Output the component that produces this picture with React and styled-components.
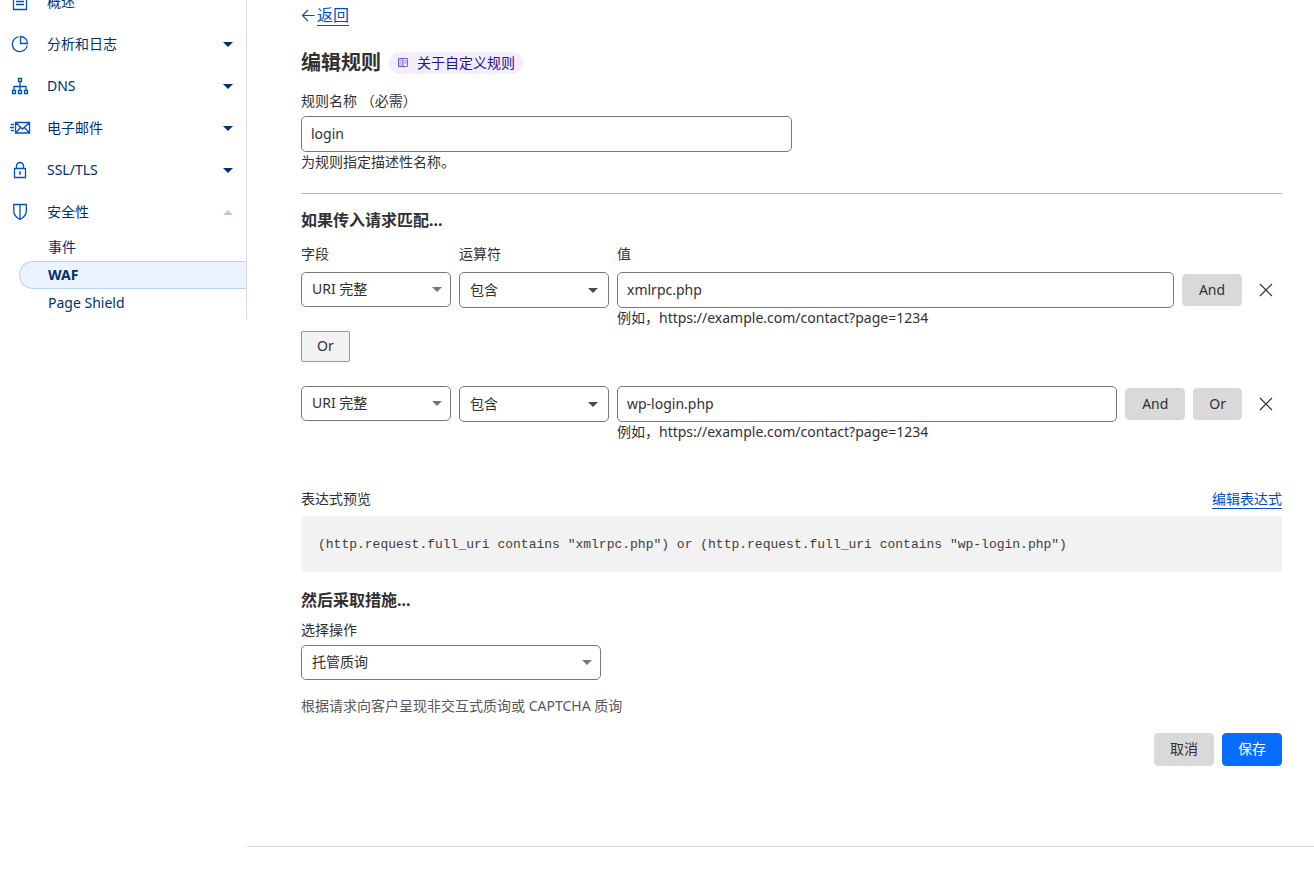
import React from "react";
import styled, { createGlobalStyle } from "styled-components";

const GlobalStyle = createGlobalStyle`
  *, *::before, *::after { box-sizing: border-box; }
  body {
    margin: 0;
    background: #fff;
    color: #313131;
    font-family: "Noto Sans", "Noto Sans CJK SC", sans-serif;
    font-size: 14px;
    line-height: 20px;
  }
  h1, h2, p, ul { margin: 0; padding: 0; }
  ul { list-style: none; }
  button, input, select { font: inherit; color: inherit; margin: 0; }
`;

const Page = styled.div`
  display: flex;
  align-items: flex-start;
  overflow: hidden;
`;

const Sidebar = styled.nav`
  flex: 0 0 247px;
  margin-top: -19px;
  padding-bottom: 2px;
  border-right: 1px solid #d9d9d9;
  color: #003070;
`;

const NavLink = styled.a`
  display: flex;
  align-items: center;
  height: 42px;
  padding: 0 13px 0 8px;
  color: inherit;
  text-decoration: none;
`;

const NavIcon = styled.svg`
  flex: none;
  width: 24px;
  height: 24px;
  margin-right: 15px;
  fill: none;
  stroke: #0051c3;
  stroke-width: 1.3;
`;

const NavText = styled.span`
  flex: 1;
`;

const Caret = styled.svg`
  flex: none;
  width: 10px;
  height: 5px;
  fill: ${(p) => p.$color};
`;

const SubLink = styled.a`
  display: flex;
  align-items: center;
  height: 28px;
  margin-left: 19px;
  padding-left: 28px;
  border: 1px solid ${(p) => (p.$active ? "#b6d3fb" : "transparent")};
  border-right: 0;
  border-radius: 14px 0 0 14px;
  background: ${(p) => (p.$active ? "#ebf3fe" : "transparent")};
  font-weight: ${(p) => (p.$active ? 700 : 400)};
  color: inherit;
  text-decoration: none;
`;

const Main = styled.main`
  flex: 1;
  min-width: 0;
`;

const Form = styled.form`
  padding: 5px 32px 80px 54px;
  border-bottom: 1px solid #d9d9d9;
`;

const BackLink = styled.a`
  display: flex;
  width: max-content;
  align-items: center;
  gap: 2px;
  height: 20px;
  font-size: 16px;
  color: #0051c3;
  text-decoration: none;
`;

const BackText = styled.span`
  border-bottom: 1px solid currentColor;
`;

const BackArrow = styled.svg`
  width: 14px;
  height: 14px;
  fill: none;
  stroke: #0051c3;
  stroke-width: 1.2;
`;

const TitleRow = styled.div`
  display: flex;
  align-items: center;
  gap: 8px;
  margin: 24px 0 14px;
`;

const Title = styled.h1`
  font-size: 20px;
  line-height: 28px;
  font-weight: 700;
`;

const DocsPill = styled.a`
  display: flex;
  align-items: center;
  gap: 8px;
  height: 22px;
  padding: 0 8px;
  border-radius: 11px;
  background: #f2eefd;
  color: #27138b;
  text-decoration: none;
`;

const BookIcon = styled.svg`
  width: 12px;
  height: 12px;
  fill: none;
  stroke: #7860dc;
`;

const Label = styled.label`
  display: block;
  margin-bottom: ${(p) => p.$gap || 5}px;
`;

const TextInput = styled.input`
  display: block;
  width: 100%;
  height: 36px;
  padding: 0 9px 1px;
  border: 1px solid #797979;
  border-radius: 5px;
  background: #fff;
  outline: 0;
`;

const NameField = styled.div`
  width: 50%;
`;

const Divider = styled.hr`
  margin: 21px 0 16px;
  border: 0;
  border-top: 1px solid #b6b6b6;
`;

const SectionTitle = styled.h2`
  font-size: 16px;
  line-height: 20px;
  font-weight: 700;
`;

const RuleGrid = styled.div`
  display: grid;
  grid-template-columns: 150px 150px minmax(0, 1fr);
  column-gap: 8px;
  margin-top: ${(p) => p.$top}px;
`;

const SelectBox = styled.div`
  display: grid;
  align-items: center;
  align-self: start;
  max-width: 300px;
  > * { grid-area: 1 / 1; }
  > svg { justify-self: end; margin-right: ${(p) => p.$inset || 9}px; pointer-events: none; }
`;

const Select = styled.select`
  appearance: none;
  width: 100%;
  height: ${(p) => p.$height || 35}px;
  padding: 0 28px 1px 10px;
  border: 1px solid #797979;
  border-radius: 5px;
  background: #fff;
  outline: 0;
`;

const ValueRow = styled.div`
  display: flex;
  align-items: center;
  gap: 8px;
`;

const Button = styled.button`
  flex: none;
  min-width: ${(p) => p.$minWidth || 48}px;
  height: ${(p) => p.$height || 32}px;
  padding: 0 15px 1px;
  border: 1px solid ${(p) => (p.$kind === "primary" ? "#056dff" : p.$kind === "outline" ? "#999" : "#d9d9d9")};
  border-radius: ${(p) => (p.$kind === "outline" ? 2 : 4)}px;
  background: ${(p) => (p.$kind === "primary" ? "#056dff" : p.$kind === "outline" ? "#f2f2f2" : "#d9d9d9")};
  color: ${(p) => (p.$kind === "primary" ? "#fff" : "#313131")};
`;

const CloseButton = styled.button`
  flex: none;
  display: grid;
  place-items: center;
  width: 32px;
  height: 32px;
  padding: 0;
  border: 0;
  background: none;
  svg { width: 14px; height: 14px; stroke: #313131; stroke-width: 1.2; }
`;

const OrRow = styled.div`
  margin-top: 3px;
`;

const PreviewHead = styled.div`
  display: flex;
  justify-content: space-between;
  align-items: flex-start;
  margin: 47px 0 7px;
`;

const EditLink = styled.a`
  color: #0051c3;
  text-decoration: none;
  border-bottom: 1px solid currentColor;
  height: 20px;
`;

const Code = styled.code`
  display: block;
  padding: 19px 17px 17px;
  border-radius: 4px;
  background: #f2f2f2;
  color: #404040;
  font-family: "Liberation Mono", monospace;
  font-size: 13px;
  margin-bottom: 18px;
`;

const ActionField = styled.div`
  margin-top: 10px;
`;

const Help = styled.p`
  margin: 16px 0 17px;
  color: #595959;
`;

const Actions = styled.div`
  display: flex;
  justify-content: flex-end;
  gap: 8px;
`;

const Triangle = ({ color, up }) => (
  <Caret $color={color} viewBox="0 0 10 5" aria-hidden="true">
    <path d={up ? "M0 5h10L5 0z" : "M0 0h10L5 5z"} />
  </Caret>
);

const navItems = [
  { text: "概述", icon: <path d="M5.5 4.500h13v15h-13zM8 8.500h8M8 11.500h8M8 14.500h8" /> },
  { text: "分析和日志", caret: "down", icon: <path d="M10.500 4.800a7.500 7.500 0 1 0 8.700 8.700M12.500 4.500v7h7a7 7 0 0 0-7-7z" /> },
  { text: "DNS", caret: "down", icon: <path d="M10.500 4.500h3v3h-3zM4.500 16.500h3v3h-3zM10.500 16.500h3v3h-3zM16.500 16.500h3v3h-3zM12 7.500v9M6 16.500V12.500h12v4" /> },
  { text: "电子邮件", caret: "down", icon: <path d="M7.500 6.500h14v10.500h-14zM7.500 6.500l7 6.500 7-6.500M7.500 17l5-5.500M21.500 17l-5-5.500M3 8.500h3M2 11.500h4M3 14.500h3" /> },
  { text: "SSL/TLS", caret: "down", icon: <path d="M6.500 10.500h11v9h-11zM8.500 10.500V8a3.500 3.500 0 0 1 7 0v2.500M12 14v3M11 14.200h2" /> },
  { text: "安全性", caret: "up", icon: <path d="M5.800 4.500h12.500v6.500c0 4-3 6.800-6.300 8.500-3.300-1.700-6.200-4.500-6.200-8.500zM12 4.500v15" /> },
];

const subItems = [{ text: "事件" }, { text: "WAF", active: true }, { text: "Page Shield" }];

function Navigation() {
  return (
    <Sidebar aria-label="导航">
      <ul>
        {navItems.map((item) => (
          <li key={item.text}>
            <NavLink href="#">
              <NavIcon viewBox="0 0 24 24" aria-hidden="true">{item.icon}</NavIcon>
              <NavText>{item.text}</NavText>
              {item.caret && <Triangle up={item.caret === "up"} color={item.caret === "up" ? "#bfcbdb" : "#003070"} />}
            </NavLink>
          </li>
        ))}
      </ul>
      <ul>
        {subItems.map((item) => (
          <li key={item.text}>
            <SubLink href="#" $active={item.active}>{item.text}</SubLink>
          </li>
        ))}
      </ul>
    </Sidebar>
  );
}

function Condition({ id, value, withLabels, withOr }) {
  return (
    <RuleGrid $top={withLabels ? 14 : 24}>
      {withLabels && (
        <>
          <Label htmlFor={`${id}-field`} $gap={8}>字段</Label>
          <Label htmlFor={`${id}-operator`} $gap={8}>运算符</Label>
          <Label htmlFor={`${id}-value`} $gap={8}>值</Label>
        </>
      )}
      <SelectBox>
        <Select id={`${id}-field`} aria-label="字段"><option>URI 完整</option></Select>
        <Triangle color="#72767d" />
      </SelectBox>
      <SelectBox $inset={11}>
        <Select id={`${id}-operator`} aria-label="运算符" $height={36}><option>包含</option></Select>
        <Triangle color="#4a4a4a" />
      </SelectBox>
      <div>
        <ValueRow>
          <TextInput id={`${id}-value`} aria-label="值" defaultValue={value} />
          <Button type="button" $minWidth={60}>And</Button>
          {withOr && <Button type="button">Or</Button>}
          <CloseButton type="button" aria-label="删除">
            <svg viewBox="0 0 14 14"><path d="M1 1l12 12M13 1L1 13" /></svg>
          </CloseButton>
        </ValueRow>
        <p>例如，https://example.com/contact?page=1234</p>
      </div>
    </RuleGrid>
  );
}

function RuleAction() {
  return (
    <ActionField>
      <Label htmlFor="action">选择操作</Label>
      <SelectBox>
        <Select id="action"><option>托管质询</option></Select>
        <Triangle color="#72767d" />
      </SelectBox>
      <Help>根据请求向客户呈现非交互式质询或 CAPTCHA 质询</Help>
    </ActionField>
  );
}

export default function App() {
  return (
    <>
      <GlobalStyle />
      <Page>
        <Navigation />
        <Main>
          <Form>
            <BackLink href="#">
              <BackArrow viewBox="0 0 14 14" aria-hidden="true"><path d="M13.500 7.500H1.500M7 2L1.500 7.500 7 13" /></BackArrow>
              <BackText>返回</BackText>
            </BackLink>
            <TitleRow>
              <Title>编辑规则</Title>
              <DocsPill href="#">
                <BookIcon viewBox="0 0 12 12" aria-hidden="true">
                  <path d="M1.500 1.500H6v8H1.500z" fill="#c9bff2" />
                  <path d="M6 1.500h4.500v8H6v1M7.500 4h2M7.500 6h2" />
                </BookIcon>
                关于自定义规则
              </DocsPill>
            </TitleRow>
            <NameField>
              <Label htmlFor="rule-name">规则名称 （必需）</Label>
              <TextInput id="rule-name" defaultValue="login" />
              <p>为规则指定描述性名称。</p>
            </NameField>
            <Divider />
            <SectionTitle>如果传入请求匹配...</SectionTitle>
            <Condition id="first" value="xmlrpc.php" withLabels />
            <OrRow>
              <Button type="button" $kind="outline" $height={31}>Or</Button>
            </OrRow>
            <Condition id="second" value="wp-login.php" withOr />
            <PreviewHead>
              <span>表达式预览</span>
              <EditLink href="#">编辑表达式</EditLink>
            </PreviewHead>
            <Code>(http.request.full_uri contains "xmlrpc.php") or (http.request.full_uri contains "wp-login.php")</Code>
            <SectionTitle>然后采取措施...</SectionTitle>
            <RuleAction />
            <Actions>
              <Button type="button" $height={33}>取消</Button>
              <Button type="submit" $kind="primary" $height={33}>保存</Button>
            </Actions>
          </Form>
        </Main>
      </Page>
    </>
  );
}
